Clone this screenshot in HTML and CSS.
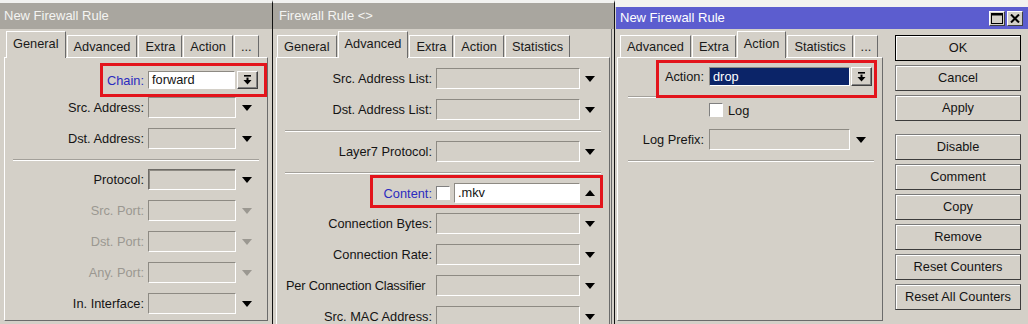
FILE: index.html
```html
<!DOCTYPE html>
<html lang="en">
<head>
    <meta charset="UTF-8">
    <meta name="viewport" content="width=device-width, initial-scale=1.0">
    <title>Firewall Rule</title>
    <link rel="stylesheet" href="styles.css">
</head>
<body>
<div class="screen">

    <!-- ventana 1: General -->
    <div class="win win-a">
        <div class="win-title">New Firewall Rule</div>
        <div class="tabs">
            <span class="tab tab-on">General</span>
            <span class="tab">Advanced</span>
            <span class="tab">Extra</span>
            <span class="tab">Action</span>
            <span class="tab">...</span>
        </div>
        <div class="pane">
            <div class="row row-combo mt13">
                <span class="mark mark-chain"></span>
                <span class="lbl lbl-blue">Chain:</span>
                <span class="fld fld-white fld-chain">forward</span>
                <span class="drop-btn">
                    <svg width="9" height="10" viewBox="0 0 9 10"><rect x="1" y="0" width="7" height="1.6"/><rect x="3.5" y="2.6" width="2" height="2.6"/><polygon points="0.5,5 8.5,5 4.5,9.6"/></svg>
                </span>
            </div>
            <div class="row mt8">
                <span class="lbl">Src. Address:</span>
                <span class="fld"></span>
                <span class="arr"></span>
            </div>
            <div class="row">
                <span class="lbl">Dst. Address:</span>
                <span class="fld"></span>
                <span class="arr"></span>
            </div>
            <div class="sep"></div>
            <div class="row mt8">
                <span class="lbl">Protocol:</span>
                <span class="fld fld-dark"></span>
                <span class="arr"></span>
            </div>
            <div class="row off">
                <span class="lbl">Src. Port:</span>
                <span class="fld"></span>
                <span class="arr"></span>
            </div>
            <div class="row off">
                <span class="lbl">Dst. Port:</span>
                <span class="fld"></span>
                <span class="arr"></span>
            </div>
            <div class="row off">
                <span class="lbl">Any. Port:</span>
                <span class="fld"></span>
                <span class="arr"></span>
            </div>
            <div class="row">
                <span class="lbl">In. Interface:</span>
                <span class="fld"></span>
                <span class="arr"></span>
            </div>
        </div>
    </div>

    <!-- ventana 2: Advanced -->
    <div class="win win-b">
        <div class="win-title">Firewall Rule &lt;&gt;</div>
        <div class="tabs">
            <span class="tab">General</span>
            <span class="tab tab-on">Advanced</span>
            <span class="tab">Extra</span>
            <span class="tab">Action</span>
            <span class="tab">Statistics</span>
        </div>
        <div class="pane">
            <div class="row">
                <span class="lbl">Src. Address List:</span>
                <span class="fld"></span>
                <span class="arr"></span>
            </div>
            <div class="row">
                <span class="lbl">Dst. Address List:</span>
                <span class="fld"></span>
                <span class="arr"></span>
            </div>
            <div class="sep"></div>
            <div class="row mt9">
                <span class="lbl">Layer7 Protocol:</span>
                <span class="fld"></span>
                <span class="arr"></span>
            </div>
            <div class="sep"></div>
            <div class="row row-content mt9">
                <span class="mark mark-content"></span>
                <span class="lbl lbl-blue">Content:</span>
                <span class="chk"></span>
                <span class="fld fld-white fld-content">.mkv</span>
                <span class="arr arr-up"></span>
            </div>
            <div class="row">
                <span class="lbl">Connection Bytes:</span>
                <span class="fld"></span>
                <span class="arr"></span>
            </div>
            <div class="row">
                <span class="lbl">Connection Rate:</span>
                <span class="fld"></span>
                <span class="arr"></span>
            </div>
            <div class="row">
                <span class="lbl lbl-long">Per Connection Classifier</span>
                <span class="fld"></span>
                <span class="arr"></span>
            </div>
            <div class="row">
                <span class="lbl">Src. MAC Address:</span>
                <span class="fld"></span>
                <span class="arr"></span>
            </div>
        </div>
    </div>

    <!-- ventana 3: Action -->
    <div class="win win-c">
        <div class="win-title">
            <span>New Firewall Rule</span>
            <span class="wbtns">
                <span class="wbtn"><svg width="12" height="11" viewBox="0 0 12 11"><rect x="0.5" y="0.5" width="11" height="10" fill="none" stroke="#000"/><rect x="0.5" y="0.5" width="11" height="2"/></svg></span>
                <span class="wbtn"><svg width="10" height="9" viewBox="0 0 10 9"><path d="M1 0.5 L9 8.5 M9 0.5 L1 8.5" stroke="#000" stroke-width="2"/></svg></span>
            </span>
        </div>
        <div class="win-body">
            <div class="win-main">
                <div class="tabs">
                    <span class="tab">Advanced</span>
                    <span class="tab">Extra</span>
                    <span class="tab tab-on">Action</span>
                    <span class="tab">Statistics</span>
                    <span class="tab">...</span>
                </div>
                <div class="pane">
                    <div class="row row-combo row-action mt9">
                        <span class="mark mark-action"></span>
                        <span class="lbl">Action:</span>
                        <span class="fld fld-sel">drop</span>
                        <span class="drop-btn">
                            <svg width="9" height="10" viewBox="0 0 9 10"><rect x="1" y="0" width="7" height="1.6"/><rect x="3.5" y="2.6" width="2" height="2.6"/><polygon points="0.5,5 8.5,5 4.5,9.6"/></svg>
                        </span>
                    </div>
                    <div class="sep mt13"></div>
                    <div class="row row-check mt5">
                        <span class="lbl"></span>
                        <span class="chk"></span>
                        <span class="chk-text">Log</span>
                    </div>
                    <div class="row mt12">
                        <span class="lbl">Log Prefix:</span>
                        <span class="fld"></span>
                        <span class="arr"></span>
                    </div>
                    <div class="sep mt11"></div>
                </div>
            </div>
            <div class="btns">
                <span class="btn btn-ok">OK</span>
                <span class="btn">Cancel</span>
                <span class="btn">Apply</span>
                <span class="btn btn-gap">Disable</span>
                <span class="btn">Comment</span>
                <span class="btn">Copy</span>
                <span class="btn">Remove</span>
                <span class="btn">Reset Counters</span>
                <span class="btn">Reset All Counters</span>
            </div>
        </div>
    </div>

</div>
</body>
</html>
```

FILE: styles.css
```css
* {
    box-sizing: border-box;
}

body {
    margin: 0;
    background-color: #d4d0c8;
    font-family: 'Liberation Sans', Arial, sans-serif;
    font-size: 12.8px;
    color: #141414;
}

.screen {
    display: flex;
    width: 1028px;
    height: 324px;
    overflow: hidden;
}

/* ventanas */
.win {
    flex: none;
    height: 324px;
    background-color: #d4d0c8;
    border-top: 3px solid #f2f2f0;
}

.win-a {
    width: 273px;
    border-right: 1px solid #111;
}

.win-b {
    width: 342px;
    border-right: 1px solid #111;
    box-shadow: inset -2px 0 0 #d4d0c8, inset -3px 0 0 #666;
}

.win-c {
    flex: 1;
    border-top-width: 7px;
    padding-left: 1px;
}

.win-title {
    height: 26px;
    line-height: 26px;
    padding-left: 4px;
    background-color: #a9a69f;
    color: #f4f4f2;
    font-size: 13px;
    white-space: nowrap;
}

.win-b .win-title {
    padding-left: 6px;
}

.win-c .win-title {
    display: flex;
    align-items: center;
    height: 22px;
    line-height: 22px;
    background-color: #5c5dcf;
    color: #fff;
}

.wbtns {
    display: flex;
    gap: 2px;
    margin-left: auto;
    margin-right: 5px;
}

.wbtn {
    display: flex;
    align-items: center;
    justify-content: center;
    width: 16px;
    height: 15px;
    background-color: #d4d0c8;
    border: 1px solid;
    border-color: #fff #404040 #404040 #fff;
}

.win-body {
    display: flex;
}

.win-main {
    width: 266px;
    margin-left: 1px;
}

/* pestañas */
.tabs {
    display: flex;
    align-items: flex-end;
    height: 28px;
}

.win-a .tabs {
    padding-left: 6px;
}

.win-b .tabs {
    padding-left: 4px;
}

.win-c .tabs {
    padding-left: 3px;
}

.tab {
    height: 22px;
    line-height: 21px;
    padding: 0 6px;
    margin-right: 1px;
    border: 1px solid;
    border-color: #fff #6b6b6b transparent #fff;
    border-bottom: none;
    white-space: nowrap;
    color: #1a1a1a;
}

.tab-on {
    position: relative;
    z-index: 1;
    height: 27px;
    line-height: 23px;
    margin-bottom: -1px;
    background-color: #d4d0c8;
}

.pane {
    position: relative;
    height: 264px;
    border: 1px solid;
    border-color: #fff #6b6b6b #6b6b6b #fff;
}

.win-a .pane {
    width: 264px;
    margin-left: 4px;
}

.win-b .pane {
    width: 334px;
    height: 290px;
    margin-left: 3px;
}

/* filas */
.row {
    position: relative;
    display: flex;
    align-items: center;
    height: 21px;
    margin-top: 10px;
}

.mt5 { margin-top: 5px; }
.mt8 { margin-top: 8px; }
.mt9 { margin-top: 9px; }
.mt11 { margin-top: 11px; }
.mt12 { margin-top: 12px; }
.mt13 { margin-top: 13px; }

.lbl {
    flex: none;
    margin-right: 4px;
    text-align: right;
    white-space: nowrap;
}

.win-a .lbl {
    width: 139px;
}

.win-b .lbl {
    width: 155px;
}

.win-c .lbl {
    width: 86px;
    margin-right: 5px;
}

.lbl-blue {
    color: #2b2bbf;
}

.win-b .lbl-long {
    padding-left: 9px;
    text-align: left;
    letter-spacing: -0.2px;
}

.fld {
    flex: none;
    height: 21px;
    padding-left: 3px;
    line-height: 19px;
    border: 1px solid;
    border-color: #8d8a83 #fff #fff #8d8a83;
    white-space: nowrap;
}

.fld-dark {
    border-color: #6e6b66 #fff #fff #6e6b66;
    box-shadow: inset 1px 1px 0 #8d8a83;
}

.win-a .fld {
    width: 88px;
}

.win-b .fld {
    width: 144px;
}

.win-c .fld {
    width: 141px;
}

.fld-white {
    background-color: #fff;
}

.fld-sel {
    background-color: #0b2468;
    color: #fff;
}

.row-combo {
    height: 18px;
}

.row-combo .fld {
    height: 18px;
    line-height: 16px;
}

.row-action {
    height: 19px;
}

.row-action .fld {
    height: 19px;
    line-height: 17px;
}

.win-a .fld-chain {
    width: 87px;
}

.win-b .fld-content {
    width: 126px;
    height: 20px;
    line-height: 18px;
}

.row-content {
    height: 20px;
}

.drop-btn {
    flex: none;
    display: flex;
    align-items: center;
    justify-content: center;
    width: 21px;
    height: 100%;
    margin-left: 2px;
    background-color: #d4d0c8;
    border: 1px solid;
    border-color: #fff #404040 #404040 #fff;
    box-shadow: inset -1px -1px 0 #808080;
}

.row-action .drop-btn {
    margin-left: 1px;
}

.arr {
    flex: none;
    display: flex;
    justify-content: center;
    width: 22px;
}

.win-b .arr {
    width: 20px;
}

.arr::before {
    content: "";
    border-left: 5px solid transparent;
    border-right: 5px solid transparent;
    border-top: 6px solid #000;
}

.arr-up::before {
    border-top: 0;
    border-bottom: 6px solid #000;
}

.off .lbl {
    color: #9b9891;
}

.off .arr::before {
    border-top-color: #9b9891;
}

.chk {
    flex: none;
    width: 14px;
    height: 14px;
    margin-right: 4px;
    background-color: #fff;
    border: 1px solid;
    border-color: #808080 #fff #fff #808080;
}

.row-check {
    height: 14px;
}

.chk-text {
    margin-left: 1px;
}

.sep {
    height: 2px;
    margin: 10px 8px 0 8px;
    border-top: 1px solid #a3a09a;
    border-bottom: 1px solid #fff;
}

.win-c .sep {
    margin-left: 10px;
}

/* recuadros rojos de la captura */
.mark {
    position: absolute;
    border: 3px solid #e3141c;
}

.mark-chain {
    left: 95px;
    top: -8px;
    width: 167px;
    height: 34px;
}

.mark-content {
    left: 93px;
    top: -8px;
    width: 233px;
    height: 33px;
}

.mark-action {
    left: 38px;
    top: -7px;
    width: 221px;
    height: 38px;
}

/* botones */
.btns {
    display: flex;
    flex-direction: column;
    width: 126px;
    margin-top: 6px;
    margin-left: 12px;
}

.btn {
    height: 26px;
    margin-bottom: 4px;
    line-height: 24px;
    text-align: center;
    border: 1px solid;
    border-color: #7a7a7a #3c3c3c #3c3c3c #7a7a7a;
    box-shadow: inset 1px 1px 0 #fff;
    white-space: nowrap;
}

.btn-ok {
    border-color: #000;
}

.btn-gap {
    margin-top: 9px;
}
```
